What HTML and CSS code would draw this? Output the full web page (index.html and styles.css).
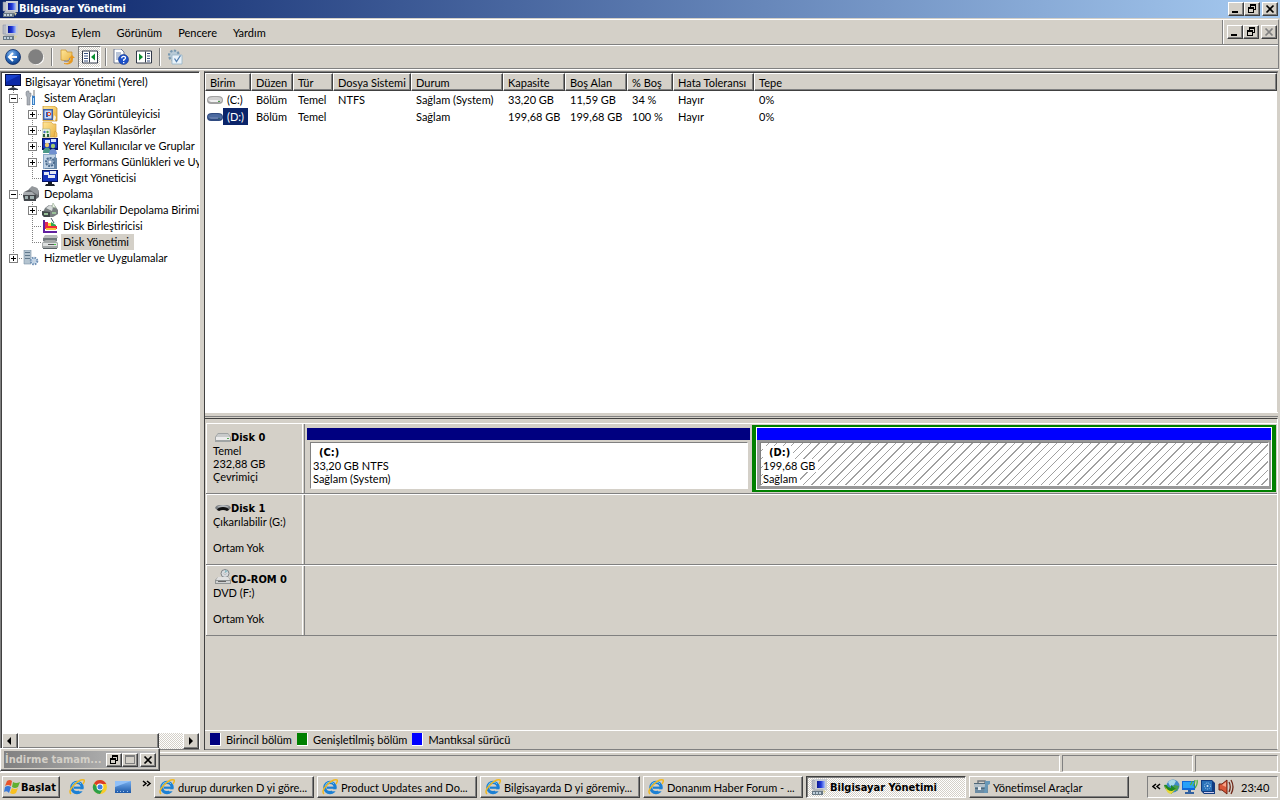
FILE: index.html
```html
<!DOCTYPE html>
<html lang="tr">
<head>
<meta charset="utf-8">
<title>Bilgisayar Yönetimi</title>
<link rel="stylesheet" href="styles.css">
</head>
<body>
<svg class="defs" aria-hidden="true">
  <defs>
    <radialGradient id="gBlue" cx="40%" cy="30%" r="75%"><stop offset="0" stop-color="#8fc0f0"/><stop offset=".5" stop-color="#2f6fc0"/><stop offset="1" stop-color="#0c3a80"/></radialGradient>
    <linearGradient id="gFolder" x1="0" y1="0" x2="1" y2="1"><stop offset="0" stop-color="#ffe79a"/><stop offset="1" stop-color="#e8b040"/></linearGradient>
    <linearGradient id="gScreen" x1="0" y1="0" x2="1" y2="0"><stop offset="0" stop-color="#0a1690"/><stop offset=".5" stop-color="#2038d8"/><stop offset="1" stop-color="#a8c0ff"/></linearGradient>
    <linearGradient id="gDesk" x1="0" y1="0" x2="0" y2="1"><stop offset="0" stop-color="#78b0f0"/><stop offset="1" stop-color="#1c58a8"/></linearGradient>
  </defs>
  <symbol id="computer" viewBox="0 0 16 16"><path d="M1 1h4v9H1z" fill="#b8bcc4" stroke="#8088a0" stroke-width=".5"/><path d="M4 0h12v11H4z" fill="#c8ccd4"/><path d="M6 2h8v7H6z" fill="url(#gScreen)"/><path d="M8 11h4v1H8z" fill="#888"/><path d="M3 10h9l1 2H2z" fill="#b4b8bc"/><path d="M1 12h11v4H1z" fill="#687884"/><path d="M2 13h2v2H2zM5 13h2v2H5zM8 13h2v2H8z" fill="#c0d0dc"/><path d="M12 11l3 1-2 3z" fill="#d8d0a0"/></symbol>
  <symbol id="monitor" viewBox="0 0 16 16"><path d="M0 0h16v12H0z" fill="#061048"/><path d="M1 1h14v10H1z" fill="#0a28a8"/><path d="M1 1h14L1 8z" fill="#1840cc"/><path d="M7 12h2v1H7z" fill="#222"/><path d="M3 15l5-2 5 2v1H3z" fill="#303848"/></symbol>
  <symbol id="tools" viewBox="0 0 16 16"><path d="M4 1h2v2h2v3L7 7v8H4V7L3 5V2z" fill="#aab0b8" stroke="#70767e" stroke-width=".5"/><path d="M10 5h2v10H9V6z" fill="#3c7fc4"/><path d="M10 0h2v6h-2z" fill="#bbb"/><path d="M10 8h1v6h-1z" fill="#b8e0ff"/></symbol>
  <symbol id="event" viewBox="0 0 16 16"><path d="M1 0h11l3 2v13H1z" fill="url(#gFolder)" stroke="#c08a20" stroke-width=".7"/><path d="M1 3h10v11H1z" fill="#4060a8"/><path d="M2.500 4.500h7v8h-7z" fill="#c8dcf8"/><path d="M4 6h2v5H4z" fill="#2858c0"/><circle cx="7" cy="8" r="1.700" fill="none" stroke="#e04820"/><path d="M12 9l2 2-1 4-2-1z" fill="#f4f0e0"/></symbol>
  <symbol id="share" viewBox="0 0 16 16"><path d="M1 0h8l2 2h3v13H1z" fill="url(#gFolder)" stroke="#d8a040" stroke-width=".7"/><path d="M13 9l2 2v4h-3z" fill="#f3c464" stroke="#c89030" stroke-width=".5"/><path d="M0 7h8v8H0z" fill="#f0f4e8" stroke="#a0b090" stroke-width=".6"/><circle cx="2.500" cy="10" r="1.200" fill="#4870c0"/><circle cx="5.500" cy="10" r="1.200" fill="#40a050"/><path d="M1 12h2v3H1zM5 12h2v3H5z" fill="#30603c"/></symbol>
  <symbol id="users" viewBox="0 0 16 16"><path d="M0 0h16v12H0z" fill="#061468"/><path d="M1 1h14v9H1z" fill="#1634bc"/><path d="M3 2h5v3H3zM9 1h5v3H9z" fill="#d8e4ff"/><circle cx="5" cy="7" r="2.200" fill="#e8c870"/><path d="M1 14c0-6 8-6 8 0v1H1z" fill="#4c9a88"/><circle cx="11" cy="8" r="2.200" fill="#a0c870"/><path d="M7 16c0-7 8-7 8 0z" fill="#7090d0"/></symbol>
  <symbol id="perf" viewBox="0 0 16 16"><path d="M1 0h13v15H1z" fill="#8aa8c8"/><path d="M2 1h11v13H2z" fill="#c2d4e6"/><path d="M12 3l3 1v11H3v-1h9z" fill="#6888a8"/><circle cx="8" cy="8" r="4" fill="#a8bed4" stroke="#4c6c90" stroke-width="2" stroke-dasharray="2 1"/><circle cx="8" cy="8" r="2" fill="#eef4fa" stroke="#5878a0" stroke-width=".7"/></symbol>
  <symbol id="device" viewBox="0 0 16 16"><path d="M0 0h16v12H0z" fill="#061468"/><path d="M1 1h14v10H1z" fill="#1634bc"/><path d="M2 2h5v3H2zM8 1h6v3H8zM6 5h7v3H6z" fill="#e4e8f4"/><path d="M6 12h4v2H6zM4 14h8l1 2H3z" fill="#181c24"/></symbol>
  <symbol id="storage" viewBox="0 0 16 16"><path d="M5 4l4-3 5 1 2 4v5l-4 3H2L0 10l1-4z" fill="#686c70"/><path d="M6 3l3-3 5 2 2 3-1 4-5-3z" fill="#94989c"/><path d="M1 6h8l3 3H0z" fill="#a8acb0"/><path d="M0 9h13v6H1z" fill="#42464a"/><path d="M2 10h3v3H2zM7 10h4v3H7z" fill="#a0b0b0"/></symbol>
  <symbol id="removable" viewBox="0 0 16 16"><path d="M3 6l4-3 6 1 3 4v4l-5 3H2l-2-3z" fill="#787e80"/><path d="M4 6l4-3 3 2-1 4z" fill="#d4d8d8"/><path d="M11 1l-1 4 4 1z" fill="#eef6ea" stroke="#92a78e" stroke-width=".6"/><path d="M0 9l8 1v5H2l-2-2z" fill="#404848"/><path d="M2 11h4v2H2zM10 10h4v2h-4z" fill="#98c098"/></symbol>
  <symbol id="defrag" viewBox="0 0 16 16"><path d="M1 2h2v11h12v2H1z" fill="#6020a0"/><path d="M3 4h3v4H3z" fill="#e02858"/><path d="M6 5h3v3H6z" fill="#ffd030"/><path d="M9 4l5 3v2H9z" fill="#30a850"/><path d="M3 8h12v3H3z" fill="#f02838"/><path d="M4 10h10v2H4z" fill="#f8c040"/><path d="M9 0l3 5" stroke="#456"/></symbol>
  <symbol id="disk" viewBox="0 0 16 16"><path d="M3 1h12l1 3H1z" fill="#b8bcbc"/><path d="M1 4h14v3H1z" fill="#70787c"/><path d="M2 7l2-1h9l3 3v5H0V9z" fill="#a4a8a8"/><path d="M1 9h14v3H1z" fill="#dde0e0"/><path d="M6 10h6v1H6z" fill="#555"/><path d="M12 10h2v1h-2z" fill="#4c4"/><path d="M1 14h14v1H1z" fill="#586064"/></symbol>
  <symbol id="services" viewBox="0 0 16 16"><path d="M1 0h7v14H1z" fill="#b4c4d0" stroke="#7890a4" stroke-width=".6"/><path d="M2 2h5v1H2zM2 5h5v1H2zM2 8h5v1H2z" fill="#60788c"/><circle cx="11" cy="11" r="3.300" fill="#d5e4f2" stroke="#7090b4" stroke-width="2" stroke-dasharray="1.600 1"/><circle cx="11" cy="11" r="1.200" fill="#fff" stroke="#7090b4" stroke-width=".5"/></symbol>
  <symbol id="vol" viewBox="0 0 16 8"><path d="M0 4q0-4 5-4h6q5 0 5 4t-4 4H4Q0 8 0 4z" fill="#a2a2a2"/><path d="M1 3q1-2 5-2h4q5 0 5 3t-4 2H4Q1 6 1 3z" fill="#d0d0d0"/><path d="M2 4h9v2H4z" fill="#f0f0f0"/><path d="M11 5h2v1h-2z" fill="#4c9c4c"/></symbol>
  <symbol id="volSel" viewBox="0 0 16 8"><path d="M0 4q0-4 5-4h6q5 0 5 4t-4 4H4Q0 8 0 4z" fill="#2f4a80"/><path d="M1 3q1-2 5-2h4q5 0 5 3t-4 2H4Q1 6 1 3z" fill="#4c6aa0"/><path d="M2 4h9v2H4z" fill="#647cac"/><path d="M11 5h2v1h-2z" fill="#345e70"/></symbol>
  <symbol id="drive" viewBox="0 0 16 9"><path d="M3 0h10l3 4v5H0V4z" fill="#a0a4a4"/><path d="M3 1h10l2 3H1z" fill="#c8caca"/><path d="M1 4h14v3H1z" fill="#ececec"/><path d="M12 5h2v1h-2z" fill="#5a5"/></symbol>
  <symbol id="usb" viewBox="0 0 16 9"><path d="M0 4q1-3 5-3h6q4 0 5 3l-2 2H2z" fill="#787c80"/><path d="M2 3q3-2 6-2t6 2L11 4H5z" fill="#b4b8bc"/><path d="M2 6q1-3 6-3t6 3l-2 1q-4-2-8 0z" fill="#101010"/></symbol>
  <symbol id="cdrom" viewBox="0 0 16 16"><circle cx="10" cy="4.500" r="4" fill="#d8dce0" stroke="#808488"/><circle cx="10" cy="4.500" r="1" fill="#fff" stroke="#888" stroke-width=".5"/><path d="M10 1v3l3-2z" fill="#8abbc4"/><path d="M3 8h10l3 3v4H0v-4z" fill="#909494"/><path d="M3 8h10l2 3H1z" fill="#e0e0e0"/><path d="M1 12h14v2H1z" fill="#d0d2d2"/><path d="M3 12h8v1H3z" fill="#666"/></symbol>
  <symbol id="back" viewBox="0 0 16 16"><circle cx="8" cy="8" r="7.500" fill="url(#gBlue)" stroke="#0c2c68" stroke-width=".8"/><path d="M8 4L4 8l4 4M5 8h7" fill="none" stroke="#fff" stroke-width="2"/></symbol>
  <symbol id="fwd" viewBox="0 0 16 16"><circle cx="8.700" cy="8.700" r="7.300" fill="#fff"/><circle cx="7.700" cy="7.700" r="7.500" fill="#808080"/></symbol>
  <symbol id="folderUp" viewBox="0 0 16 16"><path d="M2 1h5l1 2h5v10L2 11z" fill="url(#gFolder)" stroke="#c89028" stroke-width=".7"/><path d="M5 14q7 1 7-5h-2l3-3 3 3h-2q0 8-9 6z" fill="#e89820"/><path d="M5 12q5 1 6-3" fill="none" stroke="#7080b0"/></symbol>
  <symbol id="paneL" viewBox="0 0 16 13"><path d="M.5.500h15v12H.5z" fill="#fff" stroke="#303848"/><path d="M7.500 1v11" stroke="#303848"/><path d="M2 3h4M2 5.500h4M2 8h4M2 10.500h4" stroke="#385080"/><path d="M13 3v7L9 6.500z" fill="#089030"/></symbol>
  <symbol id="paneR" viewBox="0 0 16 13"><path d="M.5.500h15v12H.5z" fill="#fff" stroke="#303848"/><path d="M9.500 1v11" stroke="#303848"/><path d="M11 3h3M11 5.500h3M11 8h3M11 10.500h3" stroke="#385080"/><path d="M3 3v7l4-3.500z" fill="#089030"/></symbol>
  <symbol id="help" viewBox="0 0 16 16"><path d="M1 0h7l3 3v11H1z" fill="#fff" stroke="#506080" stroke-width=".8"/><path d="M3 4h5M3 6h5M3 8h3M3 10h3" stroke="#7088b0"/><circle cx="10.500" cy="10.500" r="5" fill="#1c50c8" stroke="#123488" stroke-width=".6"/><path d="M8.700 9.300q0-2 1.900-2t1.900 1.600q0 1-1.800 2v1M10.700 13v1.200" fill="none" stroke="#fff" stroke-width="1.300"/></symbol>
  <symbol id="gear" viewBox="0 0 16 16"><circle cx="7" cy="6.500" r="5" fill="#b8cad6" stroke="#7898b0" stroke-width="2.200" stroke-dasharray="2.300 1.500"/><path d="M5 6h10v9H5z" fill="#e9f2f9" stroke="#94b4c8" stroke-width=".8"/><path d="M7.500 9.500l2 3 4-6" fill="none" stroke="#5480b0" stroke-width="1.300"/></symbol>
  <symbol id="winflag" viewBox="0 0 16 16"><path d="M3 2q3-2 5 0L7 7Q4 5 1 7z" fill="#e8542c"/><path d="M9 3q3 2 7 0l-2 5q-3 2-6 0z" fill="#60b030"/><path d="M1 8q3-2 6 0l-2 6q-2-3-5-1z" fill="#3878d8"/><path d="M8 9q3 2 6 0l-2 5q-3 2-6 0z" fill="#f8c020"/></symbol>
  <symbol id="ie" viewBox="0 0 16 16"><circle cx="8" cy="8.500" r="5.200" fill="none" stroke="#1c80d4" stroke-width="3.200"/><path d="M5 8.700h9" stroke="#1c80d4" stroke-width="2.200"/><path d="M10 10.300h6v2h-6z" fill="#d4d0c8"/><path d="M3 7q1-4 5-4 3 0 4 2" fill="none" stroke="#6cc4f8"/><path d="M2 15Q-1 12 5 6q6-6 10-5 1 1-1 4" fill="none" stroke="#f0b820" stroke-width="1.500"/></symbol>
  <symbol id="chrome" viewBox="0 0 16 16"><circle cx="8" cy="8" r="7" fill="#f8cc28"/><path d="M8 8L2 4.400Q4 1 8 1t6.300 4H8z" fill="#dc3c28"/><path d="M2 4.400Q-1 9 3 13q2 2 5 2l3-5-5-1z" fill="#2ca048"/><circle cx="8" cy="8" r="3.400" fill="#fff"/><circle cx="8" cy="8" r="2.500" fill="#3c80e0"/></symbol>
  <symbol id="desktop" viewBox="0 0 16 16"><path d="M0 2h16v12H0z" fill="url(#gDesk)"/><path d="M0 2h16L0 8z" fill="#90c0f8"/><path d="M2 12h1v1H2zM5 12h1v1H5zM8 12h1v1H8zM12 12h1v1h-1z" fill="#a0c4ec"/></symbol>
  <symbol id="toolbox" viewBox="0 0 16 16"><path d="M4 4V2h7v2" fill="none" stroke="#707880" stroke-width="1.500"/><path d="M1 7h13v7H1z" fill="#6c8ca4"/><path d="M0 4h13v4H0z" fill="#b4c0c8"/><path d="M0 4h13v1H0zM1 9h11v1H1z" fill="#506878"/><path d="M11 2h5v3l-2 1-1 8h-3l1-8z" fill="#6898b8"/><path d="M4 8h3v3H4z" fill="#e4e8ec"/></symbol>
  <symbol id="idm" viewBox="0 0 16 16"><circle cx="9" cy="7" r="6.500" fill="#4088c8"/><path d="M4 3q4-4 8-1l-2 4-4 1z" fill="#a8d8e8"/><path d="M10 6l5 1-2 5-4-2z" fill="#48a048"/><path d="M0 6q3-1 4 2l3 1V6l5 4-5 5v-2q-6-1-7-7z" fill="#208820"/><path d="M1 7q2 5 7 5l4-2-5 5q-5-1-6-8z" fill="#e8d838"/></symbol>
  <symbol id="net" viewBox="0 0 16 16"><path d="M0 2h13v9H0z" fill="#1068d8"/><path d="M1 3h11v6H1z" fill="#28a0f8"/><path d="M6 11h3v2h3v2H3v-2h3z" fill="#3060a0"/><path d="M8 6q2-1 2-4M11 7q2-3 2-6M13 9q3-4 2-8" fill="none" stroke="#50b040" stroke-width="1.300"/></symbol>
  <symbol id="book" viewBox="0 0 16 16"><path d="M1 1h11l3 3v11H4l-3-3z" fill="#123c80"/><path d="M2 2h10v10H2z" fill="#2870b8"/><circle cx="7.500" cy="7" r="3" fill="none" stroke="#b0d8f8" stroke-dasharray="1 1"/><circle cx="7.500" cy="7" r="1" fill="#d4ecff"/><path d="M4 13.500h10" stroke="#cce"/></symbol>
  <symbol id="sound" viewBox="0 0 16 16"><path d="M1 5h3l5-4v14l-5-4H1z" fill="#d85838" stroke="#702010"/><path d="M4 6l4-3v5z" fill="#f8a488"/><path d="M11 3q2.500 5 0 10M13 1q4 7 0 14" fill="none" stroke="#702818" stroke-width="1.300"/></symbol>
  <symbol id="min" viewBox="0 0 12 10"><path d="M2 7h6v2H2z"/></symbol>
  <symbol id="restore" viewBox="0 0 12 10"><path d="M4 0h6v6H8V5h1V2H5v1H4zM2 3h6v6H2zM3 5v3h4V5z" fill-rule="evenodd"/></symbol>
  <symbol id="max" viewBox="0 0 12 10"><path d="M1 0h10v9H1zM2 2v6h8V2z" fill-rule="evenodd"/></symbol>
  <symbol id="close" viewBox="0 0 12 10"><path d="M2.500 1.500l7 7M9.500 1.500l-7 7" stroke="currentColor" stroke-width="1.700"/></symbol>
  <symbol id="left" viewBox="0 0 12 10"><path d="M7 1v8L3 5z"/></symbol>
  <symbol id="right" viewBox="0 0 12 10"><path d="M4 1v8l4-4z"/></symbol>
  <symbol id="chevR" viewBox="0 0 10 8"><path d="M1 1l3 2.500L1 6M5 1l3 2.500L5 6" fill="none" stroke="#000" stroke-width="1.500"/></symbol>
  <symbol id="chevL" viewBox="0 0 10 8"><path d="M4 1L1 3.500 4 6M8 1L5 3.500 8 6" fill="none" stroke="#000" stroke-width="1.500"/></symbol>
</svg>

<header class="titlebar">
  <svg class="ico"><use href="#computer"/></svg>
  <h1 class="title">Bilgisayar Yönetimi</h1>
  <div class="winbtns">
    <button class="cap" aria-label="Simge durumuna küçült"><svg><use href="#min"/></svg></button>
    <button class="cap" aria-label="Önceki boyut"><svg><use href="#restore"/></svg></button>
    <button class="cap cap-close" aria-label="Kapat"><svg><use href="#close"/></svg></button>
  </div>
</header>

<nav class="menubar">
  <svg class="ico"><use href="#computer"/></svg>
  <button class="menu">Dosya</button><button class="menu">Eylem</button><button class="menu">Görünüm</button><button class="menu">Pencere</button><button class="menu">Yardım</button>
  <div class="winbtns mdi">
    <button class="cap" aria-label="Simge durumuna küçült"><svg><use href="#min"/></svg></button>
    <button class="cap" aria-label="Önceki boyut"><svg><use href="#restore"/></svg></button>
    <button class="cap cap-close" aria-label="Kapat" disabled><svg><use href="#close"/></svg></button>
  </div>
</nav>

<div class="toolbar">
  <button class="tool" aria-label="Geri"><svg class="ico"><use href="#back"/></svg></button>
  <button class="tool" aria-label="İleri"><svg class="ico"><use href="#fwd"/></svg></button>
  <span class="sep"></span>
  <button class="tool" aria-label="Yukarı"><svg class="ico"><use href="#folderUp"/></svg></button>
  <button class="tool pressed" aria-label="Ağacı göster"><svg class="ico"><use href="#paneL"/></svg></button>
  <span class="sep"></span>
  <button class="tool" aria-label="Yardım"><svg class="ico"><use href="#help"/></svg></button>
  <button class="tool" aria-label="Eylem bölmesi"><svg class="ico"><use href="#paneR"/></svg></button>
  <span class="sep"></span>
  <button class="tool" aria-label="Ayarlar"><svg class="ico"><use href="#gear"/></svg></button>
</div>

<main class="content">
  <aside class="treepane">
    <div class="tree">
      <div class="node root"><svg class="ico"><use href="#monitor"/></svg><span class="label">Bilgisayar Yönetimi (Yerel)</span></div>
      <div class="node"><span class="cell tee"><button class="exp" aria-label="Daralt"></button></span><svg class="ico"><use href="#tools"/></svg><span class="label">Sistem Araçları</span></div>
      <div class="node"><span class="cell line"></span><span class="cell tee"><button class="exp plus" aria-label="Genişlet"></button></span><svg class="ico"><use href="#event"/></svg><span class="label">Olay Görüntüleyicisi</span></div>
      <div class="node"><span class="cell line"></span><span class="cell tee"><button class="exp plus" aria-label="Genişlet"></button></span><svg class="ico"><use href="#share"/></svg><span class="label">Paylaşılan Klasörler</span></div>
      <div class="node"><span class="cell line"></span><span class="cell tee"><button class="exp plus" aria-label="Genişlet"></button></span><svg class="ico"><use href="#users"/></svg><span class="label">Yerel Kullanıcılar ve Gruplar</span></div>
      <div class="node"><span class="cell line"></span><span class="cell tee"><button class="exp plus" aria-label="Genişlet"></button></span><svg class="ico"><use href="#perf"/></svg><span class="label">Performans Günlükleri ve Uy</span></div>
      <div class="node"><span class="cell line"></span><span class="cell elbow"></span><svg class="ico"><use href="#device"/></svg><span class="label">Aygıt Yöneticisi</span></div>
      <div class="node"><span class="cell tee"><button class="exp" aria-label="Daralt"></button></span><svg class="ico"><use href="#storage"/></svg><span class="label">Depolama</span></div>
      <div class="node"><span class="cell line"></span><span class="cell tee"><button class="exp plus" aria-label="Genişlet"></button></span><svg class="ico"><use href="#removable"/></svg><span class="label">Çıkarılabilir Depolama Birimi</span></div>
      <div class="node"><span class="cell line"></span><span class="cell tee"></span><svg class="ico"><use href="#defrag"/></svg><span class="label">Disk Birleştiricisi</span></div>
      <div class="node"><span class="cell line"></span><span class="cell elbow"></span><svg class="ico"><use href="#disk"/></svg><span class="label current">Disk Yönetimi</span></div>
      <div class="node"><span class="cell elbow"><button class="exp plus" aria-label="Genişlet"></button></span><svg class="ico"><use href="#services"/></svg><span class="label">Hizmetler ve Uygulamalar</span></div>
    </div>
    <div class="hscroll">
      <button class="sbtn" aria-label="Sola kaydır"><svg><use href="#left"/></svg></button>
      <span class="thumb"></span><span class="track"></span>
      <button class="sbtn" aria-label="Sağa kaydır"><svg><use href="#right"/></svg></button>
    </div>
  </aside>

  <section class="right">
    <div class="list">
      <table class="volumes">
        <colgroup><col class="w46"><col class="w42"><col class="w40"><col class="w78"><col class="w92"><col class="w62"><col class="w62"><col class="w46"><col class="w81"><col></colgroup>
        <thead><tr><th>Birim</th><th>Düzen</th><th>Tür</th><th>Dosya Sistemi</th><th>Durum</th><th>Kapasite</th><th>Boş Alan</th><th>% Boş</th><th>Hata Toleransı</th><th>Tepe</th></tr></thead>
        <tbody>
          <tr><td class="volcell"><span class="vol"><svg class="volico"><use href="#vol"/></svg><span class="volname">(C:)</span></span></td><td>Bölüm</td><td>Temel</td><td>NTFS</td><td>Sağlam (System)</td><td>33,20 GB</td><td>11,59 GB</td><td>34 %</td><td>Hayır</td><td>0%</td></tr>
          <tr><td class="volcell"><span class="vol"><svg class="volico"><use href="#volSel"/></svg><span class="volname selected">(D:)</span></span></td><td>Bölüm</td><td>Temel</td><td></td><td>Sağlam</td><td>199,68 GB</td><td>199,68 GB</td><td>100 %</td><td>Hayır</td><td>0%</td></tr>
        </tbody>
      </table>
    </div>
    <div class="splitter"></div>
    <div class="graph">
      <div class="disks">
        <div class="diskrow">
          <div class="diskinfo"><div class="diskname"><svg class="drv"><use href="#drive"/></svg><b>Disk 0</b></div><div>Temel</div><div>232,88 GB</div><div>Çevrimiçi</div></div>
          <div class="parts">
            <div class="part primary"><div class="bar"></div><div class="box"><b class="pname">(C:)</b><span>33,20 GB NTFS</span><span>Sağlam (System)</span></div></div>
            <div class="part extended"><div class="bar"></div><div class="box"><b class="pname">(D:)</b><span>199,68 GB</span><span>Sağlam</span></div></div>
          </div>
        </div>
        <div class="diskrow">
          <div class="diskinfo"><div class="diskname"><svg class="drv"><use href="#usb"/></svg><b>Disk 1</b></div><div>Çıkarılabilir (G:)</div><div class="blank"></div><div>Ortam Yok</div></div>
          <div class="parts"></div>
        </div>
        <div class="diskrow">
          <div class="diskinfo"><div class="diskname"><svg class="cd"><use href="#cdrom"/></svg><b>CD-ROM 0</b></div><div>DVD (F:)</div><div class="blank"></div><div>Ortam Yok</div></div>
          <div class="parts"></div>
        </div>
      </div>
      <div class="legend">
        <span class="key"><i class="sw navy"></i>Birincil bölüm</span>
        <span class="key"><i class="sw green"></i>Genişletilmiş bölüm</span>
        <span class="key"><i class="sw blue"></i>Mantıksal sürücü</span>
      </div>
    </div>
  </section>
</main>

<footer class="status"><span class="panel grow"></span><span class="panel mid"></span><span class="panel small"></span></footer>

<div class="minwin">
  <span class="mintitle">İndirme tamam...</span>
  <button class="cap" aria-label="Önceki boyut"><svg><use href="#restore"/></svg></button>
  <button class="cap" aria-label="Ekranı kapla" disabled><svg><use href="#max"/></svg></button>
  <button class="cap cap-close" aria-label="Kapat"><svg><use href="#close"/></svg></button>
</div>

<div class="taskbar">
  <button class="start"><svg class="ico"><use href="#winflag"/></svg>Başlat</button>
  <div class="quick">
    <button class="ql" aria-label="Internet Explorer"><svg class="ico"><use href="#ie"/></svg></button>
    <button class="ql" aria-label="Chrome"><svg class="ico"><use href="#chrome"/></svg></button>
    <button class="ql" aria-label="Masaüstü"><svg class="ico"><use href="#desktop"/></svg></button>
    <button class="ql more" aria-label="Diğer"><svg class="chev"><use href="#chevR"/></svg></button>
  </div>
  <div class="tasks">
    <button class="task"><svg class="ico"><use href="#ie"/></svg><span>durup dururken D yi göre...</span></button>
    <button class="task"><svg class="ico"><use href="#ie"/></svg><span>Product Updates and Do...</span></button>
    <button class="task"><svg class="ico"><use href="#ie"/></svg><span>Bilgisayarda D yi göremiy...</span></button>
    <button class="task"><svg class="ico"><use href="#ie"/></svg><span>Donanım Haber Forum - ...</span></button>
    <button class="task active"><svg class="ico"><use href="#computer"/></svg><span>Bilgisayar Yönetimi</span></button>
    <button class="task"><svg class="ico"><use href="#toolbox"/></svg><span>Yönetimsel Araçlar</span></button>
  </div>
  <div class="tray">
    <button class="ql" aria-label="Gizli simgeler"><svg class="chev"><use href="#chevL"/></svg></button>
    <svg class="ico"><use href="#idm"/></svg><svg class="ico"><use href="#net"/></svg><svg class="ico"><use href="#book"/></svg><svg class="ico"><use href="#sound"/></svg>
    <time class="clock">23:40</time>
  </div>
</div>
</body>
</html>
```
FILE: styles.css
```css
:root {
  --face: #d4d0c8;
  --shadow: #808080;
  --dark: #404040;
  --dots: #808080;
  --bold-font: "DejaVu Sans Condensed", "DejaVu Sans", sans-serif;
}
* { box-sizing: border-box; }
html, body { height: 100%; }
body {
  margin: 0;
  display: flex;
  flex-direction: column;
  overflow: hidden;
  position: relative;
  background: var(--face);
  color: #000;
  font: 11px/13px Lato, "Liberation Sans", sans-serif;
}
button {
  font: inherit;
  color: inherit;
  background: transparent;
  border: 0;
  padding: 0;
  margin: 0;
}
b { font-family: var(--bold-font); }
svg { display: block; flex: none; }
.defs { position: absolute; width: 0; height: 0; }
.ico { width: 16px; height: 16px; }

/* title bar */
.titlebar {
  display: flex;
  align-items: center;
  height: 18px;
  padding: 0 2px;
  background: linear-gradient(to right, #0a246a, #a6caf0);
  flex: none;
}
.title { margin: 0 auto 0 1px; font: bold 11px/16px var(--bold-font); color: #fff; }
.winbtns { display: flex; }
.cap {
  width: 16px;
  height: 14px;
  padding: 1px;
  background: var(--face);
  border: 1px solid;
  border-color: #fff var(--dark) var(--dark) #fff;
  box-shadow: inset -1px -1px var(--shadow);
}
.cap svg { width: 12px; height: 10px; }
.cap:disabled { color: var(--shadow); fill: var(--shadow); }
.cap-close { margin-left: 2px; }

/* menu bar */
.menubar {
  display: flex;
  align-items: center;
  gap: 16px;
  height: 26px;
  margin: 1px 1px 0 0;
  padding-left: 2px;
  border-top: 1px solid #fff;
  border-right: 1px solid var(--shadow);
  border-bottom: 1px solid var(--shadow);
  box-shadow: inset 0 1px var(--face), 0 1px #fff;
  flex: none;
}
.menubar .ico { margin-right: -9px; }
.mdi {
  align-self: stretch;
  align-items: center;
  margin-left: auto;
  padding: 0 1px 0 3px;
  border-left: 1px solid #fff;
  box-shadow: -1px 0 var(--shadow);
}

/* toolbar */
.toolbar {
  display: flex;
  align-items: center;
  height: 24px;
  margin: 0 1px 0 0;
  padding-left: 1px;
  border-right: 1px solid var(--shadow);
  border-bottom: 1px solid var(--shadow);
  box-shadow: 0 1px #fff;
  flex: none;
}
.tool {
  display: grid;
  place-items: center;
  width: 23px;
  height: 22px;
}
.pressed {
  border: 1px solid;
  border-color: var(--shadow) #fff #fff var(--shadow);
  background: repeating-conic-gradient(#fff 0 25%, var(--face) 0 50%) 0 0 / 2px 2px;
}
.sep {
  width: 2px;
  height: 18px;
  margin: 0 2px 0 4px;
  border-left: 1px solid var(--shadow);
  border-right: 1px solid #fff;
}

/* work area */
.content {
  flex: 1;
  min-height: 0;
  display: flex;
  gap: 4px;
  padding: 2px 2px 2px 0;
}
.treepane {
  width: 200px;
  flex: none;
  display: flex;
  flex-direction: column;
  background: #fff;
  border: 1px solid var(--shadow);
  border-right-color: #fff;
  box-shadow: inset 1px 1px var(--dark);
}
.tree { flex: 1; min-height: 0; overflow: hidden; padding: 2px 1px 0 3px; }
.node { display: flex; height: 16px; white-space: nowrap; }
.node .ico { margin-right: 3px; }
.root .ico { margin-left: 1px; }
.label { padding: 0 1px 0 2px; line-height: 16px; }
.root .label { padding-left: 1px; }
.current { background: var(--face); padding-right: 5px; }
.cell {
  display: flex;
  align-items: center;
  width: 19px;
  height: 16px;
  padding-left: 5px;
  flex: none;
  background-repeat: no-repeat;
}
.line { background-image: repeating-linear-gradient(var(--dots) 0 1px, transparent 1px 2px); background-size: 1px 16px; background-position: 9px 0; }
.tee, .elbow {
  background-image: repeating-linear-gradient(var(--dots) 0 1px, transparent 1px 2px), repeating-linear-gradient(to right, var(--dots) 0 1px, transparent 1px 2px);
  background-size: 1px 16px, 10px 1px;
  background-position: 9px 0, 9px 8px;
}
.elbow { background-size: 1px 8px, 10px 1px; }
.exp {
  width: 9px;
  height: 9px;
  border: 1px solid var(--shadow);
  background: linear-gradient(#000, #000) center / 5px 1px no-repeat, #fff;
}
.plus { background: linear-gradient(#000, #000) center / 5px 1px no-repeat, linear-gradient(#000, #000) center / 1px 5px no-repeat, #fff; }

.hscroll { display: flex; height: 16px; margin-left: 1px; flex: none; }
.sbtn, .thumb {
  background: var(--face);
  border: 1px solid;
  border-color: #fff var(--dark) var(--dark) #fff;
  box-shadow: inset -1px -1px var(--shadow);
}
.sbtn { width: 16px; flex: none; display: grid; place-items: center; }
.sbtn svg { width: 12px; height: 10px; }
.thumb { flex: 141; }
.track { flex: 24; background: repeating-conic-gradient(#fff 0 25%, var(--face) 0 50%) 0 0 / 2px 2px; }

.right {
  flex: 1;
  min-width: 0;
  display: flex;
  flex-direction: column;
  border-left: 1px solid var(--dark);
  border-top: 1px solid var(--shadow);
}
.list { flex: 341; min-height: 0; background: #fff; border-top: 1px solid var(--dark); border-right: 1px solid var(--face); }
.volumes { width: 100%; table-layout: fixed; border-collapse: separate; border-spacing: 0; }
.volumes th, .volumes td { padding: 0 0 0 5px; text-align: left; font-weight: normal; white-space: nowrap; }
.volumes th {
  height: 18px;
  background: var(--face);
  border: 1px solid;
  border-color: #fff var(--dark) var(--dark) #fff;
  box-shadow: inset -1px -1px var(--shadow);
  padding-left: 4px;
}
.volumes td { height: 17px; }
.volumes .volcell { padding-left: 2px; }
.vol { display: flex; align-items: center; }
.volico { width: 16px; height: 8px; }
.volname { padding: 2px 4px; line-height: 13px; }
.selected { background: #0a246a; color: #fff; }
.w40 { width: 40px; }
.w42 { width: 42px; }
.w46 { width: 46px; }
.w62 { width: 62px; }
.w78 { width: 78px; }
.w81 { width: 81px; }
.w92 { width: 92px; }

.splitter { height: 6px; flex: none; border-top: 1px solid #fff; border-bottom: 1px solid var(--face); box-shadow: inset 0 -1px var(--shadow); }
.graph {
  flex: 332;
  min-height: 0;
  display: flex;
  flex-direction: column;
  border-top: 1px solid var(--dark);
  border-right: 1px solid #fff;
  border-bottom: 1px solid var(--shadow);
}
.disks { flex: 1; padding: 4px 0 0 1px; }
.diskrow { display: flex; height: 71px; border-top: 1px solid #fff; border-bottom: 1px solid var(--shadow); }
.diskinfo {
  width: 97px;
  flex: none;
  padding: 7px 0 0 6px;
  border-left: 1px solid #fff;
  border-right: 1px solid #fff;
  white-space: nowrap;
}
.diskname { display: flex; align-items: center; height: 13px; padding-left: 2px; }
.drv { width: 16px; height: 9px; }
.cd { width: 16px; height: 16px; margin-top: -4px; }
.blank { height: 13px; }
.parts { flex: 1; min-width: 0; display: flex; margin-left: 1px; padding: 1px 1px 1px 1px; border-left: 1px solid var(--shadow); }
.part { display: flex; flex-direction: column; min-width: 0; }
.primary { flex: 443; padding: 3px 2px 0 1px; }
.extended { flex: 514; border: solid #008000; border-width: 2px 4px; padding: 1px; background: #989898; box-shadow: inset 0 0 0 1px #fff; }
.bar { height: 12px; flex: none; }
.primary .bar { background: #000080; }
.extended .bar { background: #0000ff; }
.box {
  flex: 1;
  display: flex;
  flex-direction: column;
  align-items: flex-start;
  margin: 2px 2px 3px 3px;
  padding: 3px 3px 0 2px;
  background: #fff;
  border: 1px solid;
  border-color: var(--shadow) #fff #fff var(--shadow);
  white-space: nowrap;
}
.extended .box { background: repeating-linear-gradient(135deg, #fff 0 5px, #a0a0a0 5px 6px); }
.extended .box b, .extended .box span { background: #fff; padding-right: 3px; }
.pname { padding: 0 6px; }

.legend { display: flex; align-items: center; height: 19px; padding: 0 0 1px 5px; gap: 5px; border-top: 1px solid #fff; flex: none; }
.key { display: flex; align-items: center; gap: 5px; white-space: nowrap; }
.sw { width: 11px; height: 13px; border: 1px solid #fff; border-width: 0 1px 1px 0; }
.navy { background: #000080; }
.green { background: #008000; }
.blue { background: #0000ff; }

/* status bar */
.status { display: flex; gap: 2px; height: 20px; padding: 2px 2px 0 0; border-top: 1px solid #fff; flex: none; }
.panel { border: 1px solid; border-color: var(--shadow) #fff #fff var(--shadow); }
.grow { flex: 1; }
.mid { width: 131px; }
.small { width: 83px; }

/* minimised window */
.minwin {
  position: absolute;
  left: 0;
  bottom: 29px;
  width: 160px;
  height: 23px;
  display: flex;
  align-items: center;
  padding: 2px 3px;
  background: linear-gradient(to right, #808080, #c0c0c0) content-box, var(--face);
  border: 1px solid;
  border-color: #fff var(--dark) var(--dark) #fff;
  box-shadow: inset -1px -1px var(--shadow);
}
.minwin .cap { flex: none; }
.mintitle { flex: 1; padding-left: 1px; white-space: nowrap; font: bold 11px/16px var(--bold-font); color: #d4d0c8; }

/* taskbar */
.taskbar { display: flex; height: 28px; padding: 3px 2px 2px; border-top: 1px solid #fff; flex: none; }
.start, .task {
  display: flex;
  align-items: center;
  background: var(--face);
  border: 1px solid;
  border-color: #fff var(--dark) var(--dark) #fff;
  box-shadow: inset -1px -1px var(--shadow);
  white-space: nowrap;
}
.start { width: 58px; padding-left: 1px; gap: 1px; font: bold 11px/13px var(--bold-font); flex: none; }
.quick { display: flex; align-items: center; gap: 7px; width: 94px; padding-left: 9px; flex: none; }
.chev { width: 10px; height: 8px; }
.more { align-self: flex-start; margin: 4px 0 0 4px; }
.tasks { flex: 1; min-width: 0; display: flex; gap: 3px; margin-right: 18px; }
.task { flex: 1; min-width: 0; padding: 0 4px; gap: 3px; }
.active {
  font: bold 11px/13px var(--bold-font);
  border-color: var(--dark) #fff #fff var(--dark);
  box-shadow: inset 1px 1px var(--shadow);
  background: repeating-conic-gradient(#fff 0 25%, var(--face) 0 50%) 0 0 / 2px 2px;
}
.tray {
  display: flex;
  align-items: center;
  gap: 2px;
  width: 131px;
  padding-left: 4px;
  border: 1px solid;
  border-color: var(--shadow) #fff #fff var(--shadow);
  flex: none;
}
.clock { margin-left: 5px; }
```
